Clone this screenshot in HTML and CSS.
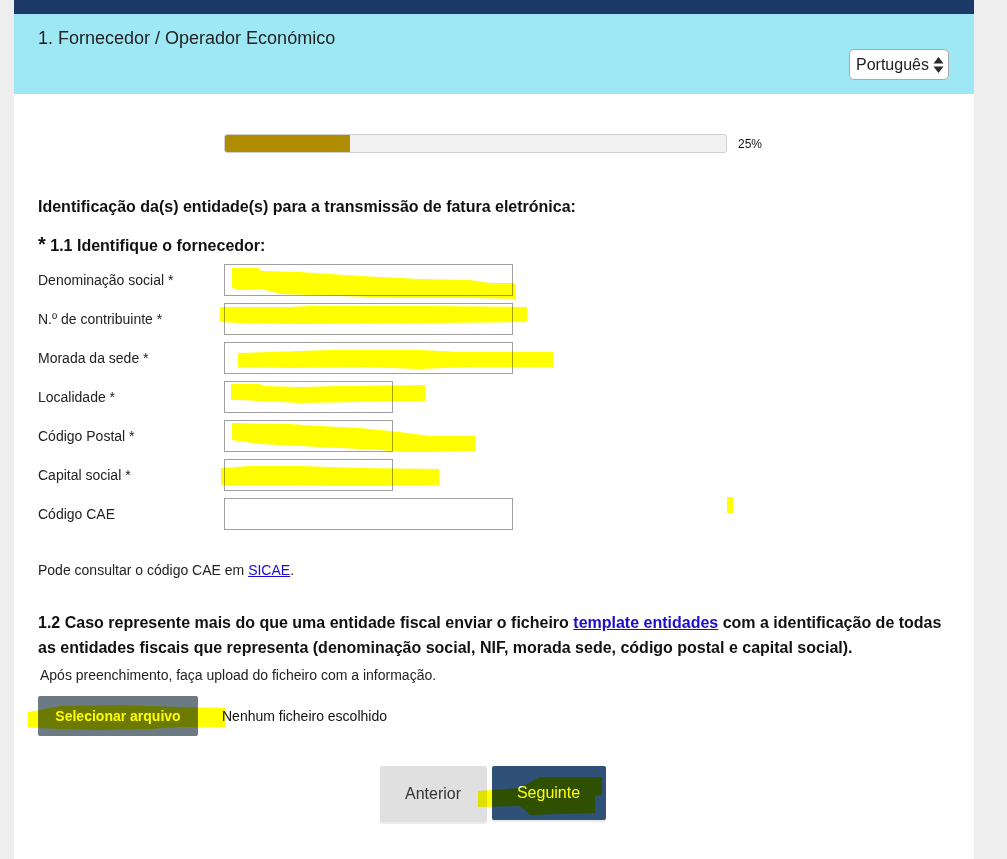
FILE: index.html
```html
<!DOCTYPE html>
<html lang="pt">
<head>
<meta charset="utf-8">
<title>Fornecedor / Operador Económico</title>
<link rel="stylesheet" href="styles.css">
</head>
<body>
<div class="page">
  <div class="topbar"></div>
  <header class="header">
    <h1 class="title">1. Fornecedor / Operador Económico</h1>
    <div class="lang-select">
      <span>Português</span>
      <svg class="lang-arrows" width="11" height="18" viewBox="0 0 11 18"><path d="M5.5 1 L10.5 7.5 H0.5 Z M5.5 17 L10.5 10.5 H0.5 Z" fill="#2b2b2b"/></svg>
    </div>
  </header>

  <main class="content">
    <div class="progress-row">
      <div class="progress"><div class="progress-fill" style="width:25%"></div></div>
      <span class="progress-label">25%</span>
    </div>

    <h2 class="section-title">Identificação da(s) entidade(s) para a transmissão de fatura eletrónica:</h2>
    <h3 class="sub-title"><span class="req">*</span> 1.1 Identifique o fornecedor:</h3>

    <div class="form-grid">
      <label class="lbl">Denominação social *</label><div class="field field-long"></div>
      <label class="lbl">N.º de contribuinte *</label><div class="field field-long"></div>
      <label class="lbl">Morada da sede *</label><div class="field field-long"></div>
      <label class="lbl">Localidade *</label><div class="field field-short"></div>
      <label class="lbl">Código Postal *</label><div class="field field-short"></div>
      <label class="lbl">Capital social *</label><div class="field field-short"></div>
      <label class="lbl">Código CAE</label><div class="field field-long"></div>
    </div>

    <p class="note">Pode consultar o código CAE em <a href="#" class="link">SICAE</a>.</p>

    <p class="multi">1.2 Caso represente mais do que uma entidade fiscal enviar o ficheiro <a href="#" class="link">template entidades</a> com a identificação de todas as entidades fiscais que representa (denominação social, NIF, morada sede, código postal e capital social).</p>
    <p class="upload-note">Após preenchimento, faça upload do ficheiro com a informação.</p>

    <div class="file-row">
      <span class="file-btn">Selecionar arquivo</span>
      <span class="file-name">Nenhum ficheiro escolhido</span>
    </div>

    <div class="nav-row">
      <button class="btn btn-prev">Anterior</button>
      <button class="btn btn-next">Seguinte</button>
    </div>
  </main>
</div>

<svg class="marks" width="1007" height="859" viewBox="0 0 1007 859">
  <g fill="#ffff00">
    <polygon points="232,268 258,268 262,271 300,272 360,276 420,279 470,280 490,283 515,283 516,299 470,298 400,298 340,296 280,294 262,289 240,290 232,288"/>
    <polygon points="220,307 290,307 310,306 430,306 527,307 527,322 430,323 300,324 240,323 220,322"/>
    <polygon points="238,353 270,352 300,351 330,350 420,350 460,352 500,352 553,352 553,367 470,367 420,369 360,367 290,368 238,367"/>
    <polygon points="231,384 260,384 265,386 300,387 340,386 425,385 425,401 360,402 300,403 260,401 240,400 231,400"/>
    <polygon points="232,423 290,424 320,426 360,428 400,432 430,436 475,436 475,451 430,452 400,452 380,450 340,448 300,446 260,444 232,440"/>
    <polygon points="221,468 250,466 300,466 330,467 360,468 439,469 439,485 380,486 330,486 290,485 250,485 221,485"/>
    <rect x="727" y="497" width="6" height="16"/>
    <polygon points="28,712 40,710 60,706 120,705 150,706 180,707 225,708 225,727 180,727 150,729 100,730 60,729 40,728 28,727"/>
    <polygon points="478,791 520,788 540,777 602,777 602,795 595,796 595,813 560,814 530,815 520,806 478,807"/>
  </g>
</svg>
</body>
</html>
```

FILE: styles.css
```css
html, body {
  margin: 0;
  padding: 0;
}
body {
  background: #eeeeee;
  font-family: "Liberation Sans", Arial, sans-serif;
  color: #111;
  width: 1007px;
  height: 859px;
  overflow: hidden;
  position: relative;
}
.page {
  width: 960px;
  margin-left: 14px;
  background: #ffffff;
  min-height: 859px;
}
.topbar {
  height: 14px;
  background: #1b3a68;
}
.header {
  height: 80px;
  box-sizing: border-box;
  background: #9de8f4;
  padding: 14px 25px 0 24px;
  display: flex;
  flex-direction: column;
}
.title {
  margin: 0;
  font-size: 18px;
  font-weight: normal;
  line-height: 21px;
  color: #222;
}
.lang-select {
  align-self: flex-end;
  margin-top: 0;
  height: 31px;
  width: 100px;
  box-sizing: border-box;
  border: 1px solid #aaa;
  border-radius: 5px;
  background: #fff;
  display: flex;
  align-items: center;
  justify-content: space-between;
  padding: 0 4px 0 6px;
  font-size: 16px;
  color: #222;
}
.lang-arrows {
  display: block;
}
.content {
  padding: 40px 24px 0 24px;
}
.progress-row {
  display: flex;
  align-items: center;
  padding-left: 186px;
  height: 19px;
}
.progress {
  width: 503px;
  height: 19px;
  box-sizing: border-box;
  border: 1px solid #cfcfcf;
  border-radius: 3px;
  background: #f1f1f1;
  overflow: hidden;
}
.progress-fill {
  height: 100%;
  background: #b08d00;
}
.progress-label {
  margin-left: 11px;
  font-size: 12px;
  color: #111;
}
.section-title {
  margin: 44px 0 0 0;
  font-size: 16px;
  font-weight: bold;
  line-height: 19px;
  color: #111;
}
.sub-title {
  margin: 19px 0 0 0;
  font-size: 16px;
  font-weight: bold;
  line-height: 19px;
  color: #111;
}
.req {
  font-size: 20px;
}
.form-grid {
  margin-top: 9px;
  display: grid;
  grid-template-columns: 186px auto;
  row-gap: 7px;
  align-items: center;
}
.lbl {
  font-size: 14px;
  color: #222;
}
.field {
  height: 32px;
  box-sizing: border-box;
  border: 1px solid #a0a0a0;
  background: transparent;
}
.field-long { width: 289px; }
.field-short { width: 169px; }
.note {
  margin: 32px 0 0 0;
  font-size: 14px;
  line-height: 16px;
  color: #222;
}
.link {
  color: #1a0dcc;
  text-decoration: underline;
}
.multi {
  margin: 32px 0 0 0;
  font-size: 16px;
  font-weight: bold;
  line-height: 25px;
  color: #111;
}
.multi .link {
  font-weight: bold;
}
.upload-note {
  margin: 7px 0 0 2px;
  font-size: 14px;
  line-height: 16px;
  color: #222;
}
.file-row {
  margin-top: 13px;
  display: flex;
  align-items: center;
}
.file-btn {
  width: 160px;
  height: 40px;
  box-sizing: border-box;
  background: #6c7a83;
  color: #fff;
  font-size: 14px;
  font-weight: bold;
  border-radius: 2px;
  display: flex;
  align-items: center;
  justify-content: center;
}
.file-name {
  margin-left: 24px;
  font-size: 14px;
  color: #111;
}
.nav-row {
  margin-top: 30px;
  display: flex;
  justify-content: center;
  align-items: flex-start;
  gap: 5px;
  padding-right: 3px;
}
.btn {
  border: none;
  font-family: "Liberation Sans", Arial, sans-serif;
  font-size: 16px;
  border-radius: 2px;
  box-shadow: 0 2px 0 #ececec;
  padding: 0;
}
.btn-prev {
  width: 107px;
  height: 56px;
  background: #e0e0e0;
  color: #333;
}
.btn-next {
  width: 114px;
  height: 54px;
  background: #2f5077;
  color: #fff;
}
.marks {
  position: absolute;
  left: 0;
  top: 0;
  pointer-events: none;
  mix-blend-mode: multiply;
}
```
